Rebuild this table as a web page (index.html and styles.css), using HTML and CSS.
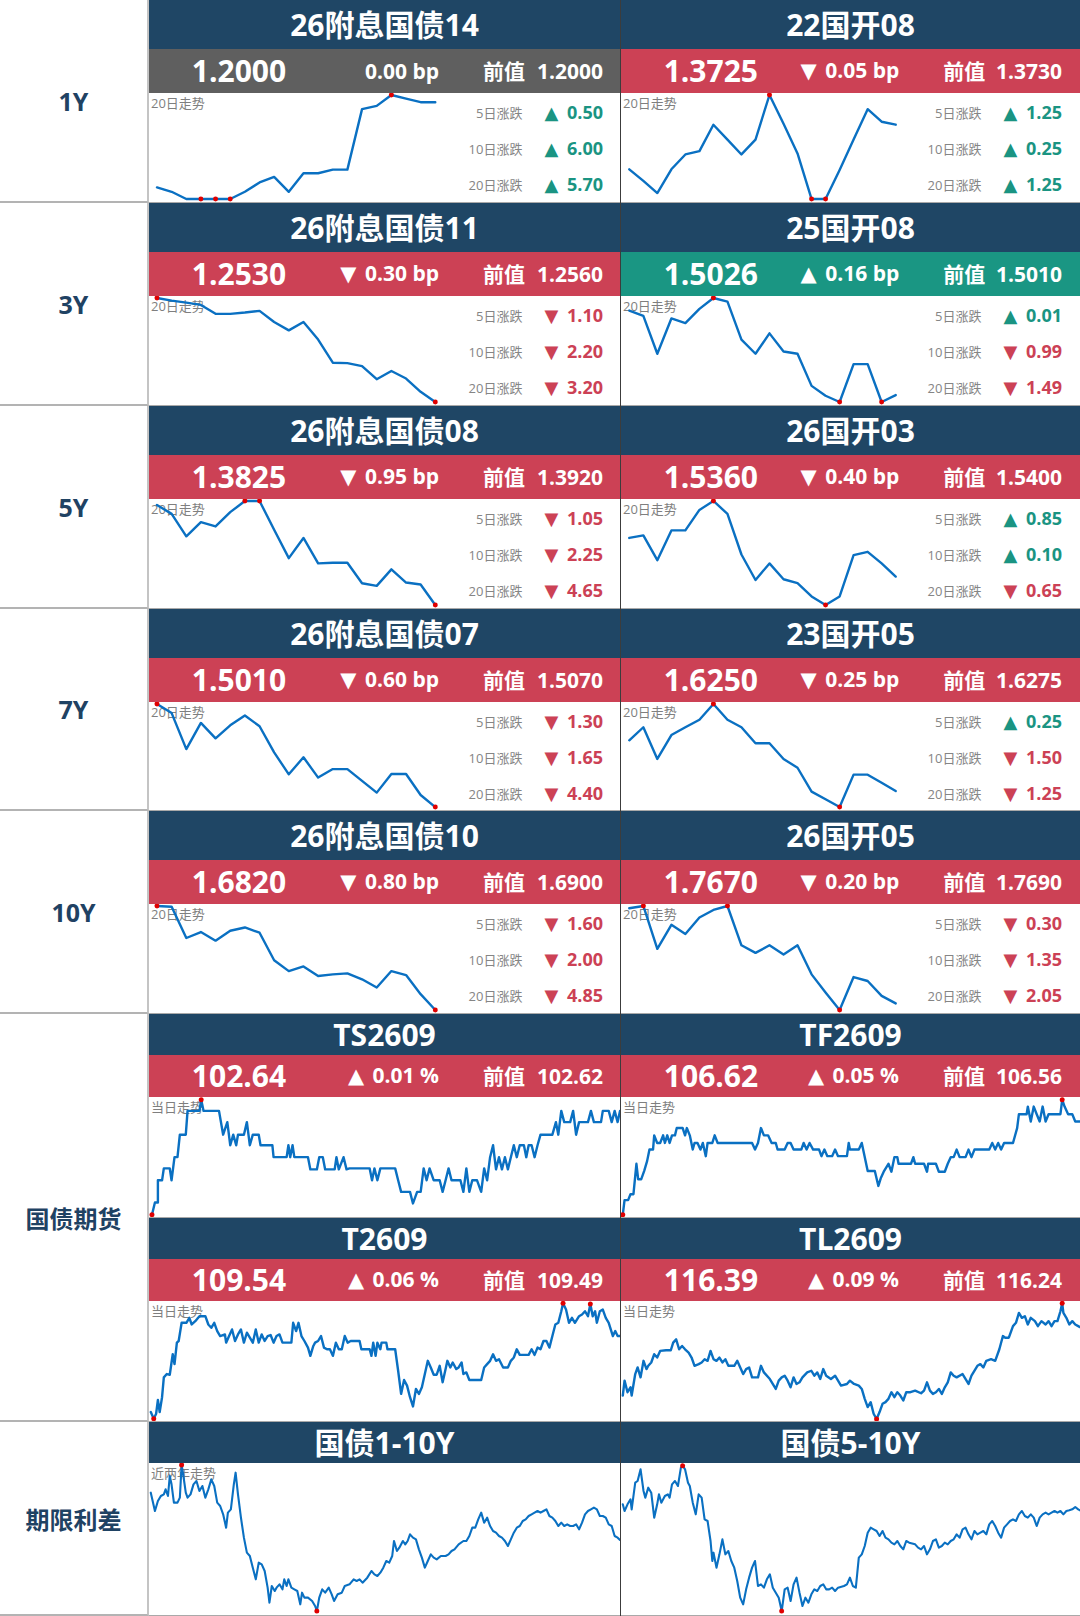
FILE: index.html
```html
<!DOCTYPE html>
<html lang="zh-CN">
<head>
<meta charset="utf-8">
<title>债券行情</title>
<link rel="stylesheet" href="styles.css">
</head>
<body>
<div class="board">

  <!-- 1Y -->
  <div class="lbl">1Y</div>
  <div class="cell c1">
    <div class="hd">26附息国债14</div>
    <div class="pr flat"><span class="px">1.2000</span><span class="chg">0.00 bp</span><span class="prev"><b>前值</b><b>1.2000</b></span></div>
    <div class="ch">
      <span class="tag">20日走势</span>
      <svg class="spark" viewBox="0 0 472 110" preserveAspectRatio="none">
        <polyline class="ln" points="8,95.3 22.7,99.7 37.4,107 52,107 66.7,107 81.4,107 96.1,99.7 110.8,90.3 125.4,84.7 140.1,99.7 154.8,81 169.5,81 184.2,77.3 198.8,77.3 213.5,16.3 228.2,13 242.9,2 257.6,5.7 272.2,9.3 286.9,9.3"/>
        <circle class="dot" cx="52" cy="107" r="2.5"/><circle class="dot" cx="66.7" cy="107" r="2.5"/><circle class="dot" cx="81.4" cy="107" r="2.5"/><circle class="dot" cx="242.9" cy="2" r="2.5"/>
      </svg>
      <div class="stats">
        <span class="k">5日涨跌</span><span class="v up"><i>▲</i> 0.50</span>
        <span class="k">10日涨跌</span><span class="v up"><i>▲</i> 6.00</span>
        <span class="k">20日涨跌</span><span class="v up"><i>▲</i> 5.70</span>
      </div>
    </div>
  </div>
  <div class="cell c2">
    <div class="hd">22国开08</div>
    <div class="pr dn"><span class="px">1.3725</span><span class="chg"><i>▼</i> 0.05 bp</span><span class="prev"><b>前值</b><b>1.3730</b></span></div>
    <div class="ch">
      <span class="tag">20日走势</span>
      <svg class="spark" viewBox="0 0 460 110" preserveAspectRatio="none">
        <polyline class="ln" points="8.3,77 22.4,88.7 36.4,101 50.5,77 64.5,62 78.6,58.7 92.6,32 106.7,47 120.7,62 134.8,47 148.8,2 162.9,31 176.9,61 191,107 205,107 219.1,77.7 233.1,47 247.2,16.3 261.2,29 275.3,32"/>
        <circle class="dot" cx="148.8" cy="2" r="2.5"/><circle class="dot" cx="191" cy="107" r="2.5"/><circle class="dot" cx="205" cy="107" r="2.5"/>
      </svg>
      <div class="stats">
        <span class="k">5日涨跌</span><span class="v up"><i>▲</i> 1.25</span>
        <span class="k">10日涨跌</span><span class="v up"><i>▲</i> 0.25</span>
        <span class="k">20日涨跌</span><span class="v up"><i>▲</i> 1.25</span>
      </div>
    </div>
  </div>

  <!-- 3Y -->
  <div class="lbl">3Y</div>
  <div class="cell c1">
    <div class="hd">26附息国债11</div>
    <div class="pr dn"><span class="px">1.2530</span><span class="chg"><i>▼</i> 0.30 bp</span><span class="prev"><b>前值</b><b>1.2560</b></span></div>
    <div class="ch">
      <span class="tag">20日走势</span>
      <svg class="spark" viewBox="0 0 472 110" preserveAspectRatio="none">
        <polyline class="ln" points="8,2 22.7,4.7 37.4,6.7 52,9 66.7,18 81.4,18 96.1,16.7 110.8,15 125.4,26.3 140.1,34.7 154.8,26.3 169.5,44 184.2,67.3 198.8,67.7 213.5,70.7 228.2,84 242.9,75.7 257.6,83.3 272.2,96.7 286.9,107"/>
        <circle class="dot" cx="8" cy="2" r="2.5"/><circle class="dot" cx="286.9" cy="107" r="2.5"/>
      </svg>
      <div class="stats">
        <span class="k">5日涨跌</span><span class="v dn"><i>▼</i> 1.10</span>
        <span class="k">10日涨跌</span><span class="v dn"><i>▼</i> 2.20</span>
        <span class="k">20日涨跌</span><span class="v dn"><i>▼</i> 3.20</span>
      </div>
    </div>
  </div>
  <div class="cell c2">
    <div class="hd">25国开08</div>
    <div class="pr up"><span class="px">1.5026</span><span class="chg"><i>▲</i> 0.16 bp</span><span class="prev"><b>前值</b><b>1.5010</b></span></div>
    <div class="ch">
      <span class="tag">20日走势</span>
      <svg class="spark" viewBox="0 0 460 110" preserveAspectRatio="none">
        <polyline class="ln" points="8.3,14.7 22.4,20 36.4,58.3 50.5,22.7 64.5,27.3 78.6,13 92.6,2 106.7,5.7 120.7,44 134.8,58.3 148.8,37.7 162.9,56 176.9,58.3 191,90.7 205,100.7 219.1,107 233.1,68.7 247.2,68.7 261.2,107 275.3,100"/>
        <circle class="dot" cx="92.6" cy="2" r="2.5"/><circle class="dot" cx="219.1" cy="107" r="2.5"/><circle class="dot" cx="261.2" cy="107" r="2.5"/>
      </svg>
      <div class="stats">
        <span class="k">5日涨跌</span><span class="v up"><i>▲</i> 0.01</span>
        <span class="k">10日涨跌</span><span class="v dn"><i>▼</i> 0.99</span>
        <span class="k">20日涨跌</span><span class="v dn"><i>▼</i> 1.49</span>
      </div>
    </div>
  </div>

  <!-- 5Y -->
  <div class="lbl">5Y</div>
  <div class="cell c1">
    <div class="hd">26附息国债08</div>
    <div class="pr dn"><span class="px">1.3825</span><span class="chg"><i>▼</i> 0.95 bp</span><span class="prev"><b>前值</b><b>1.3920</b></span></div>
    <div class="ch">
      <span class="tag">20日走势</span>
      <svg class="spark" viewBox="0 0 472 110" preserveAspectRatio="none">
        <polyline class="ln" points="8,6 22.7,15 37.4,37.7 52,23.3 66.7,27.7 81.4,13.3 96.1,2 110.8,2 125.4,31 140.1,59.7 154.8,39.3 169.5,65 184.2,64.3 198.8,64.3 213.5,85 228.2,87.7 242.9,71 257.6,84.3 272.2,86.3 286.9,107"/>
        <circle class="dot" cx="96.1" cy="2" r="2.5"/><circle class="dot" cx="110.8" cy="2" r="2.5"/><circle class="dot" cx="286.9" cy="107" r="2.5"/>
      </svg>
      <div class="stats">
        <span class="k">5日涨跌</span><span class="v dn"><i>▼</i> 1.05</span>
        <span class="k">10日涨跌</span><span class="v dn"><i>▼</i> 2.25</span>
        <span class="k">20日涨跌</span><span class="v dn"><i>▼</i> 4.65</span>
      </div>
    </div>
  </div>
  <div class="cell c2">
    <div class="hd">26国开03</div>
    <div class="pr dn"><span class="px">1.5360</span><span class="chg"><i>▼</i> 0.40 bp</span><span class="prev"><b>前值</b><b>1.5400</b></span></div>
    <div class="ch">
      <span class="tag">20日走势</span>
      <svg class="spark" viewBox="0 0 460 110" preserveAspectRatio="none">
        <polyline class="ln" points="8.3,39.3 22.4,36.7 36.4,61.7 50.5,31.7 64.5,31.7 78.6,11 92.6,2 106.7,15 120.7,56 134.8,81.7 148.8,65 162.9,81 176.9,85 191,98.3 205,107 219.1,98.3 233.1,56.7 247.2,53.3 261.2,65 275.3,78.3"/>
        <circle class="dot" cx="92.6" cy="2" r="2.5"/><circle class="dot" cx="205" cy="107" r="2.5"/>
      </svg>
      <div class="stats">
        <span class="k">5日涨跌</span><span class="v up"><i>▲</i> 0.85</span>
        <span class="k">10日涨跌</span><span class="v up"><i>▲</i> 0.10</span>
        <span class="k">20日涨跌</span><span class="v dn"><i>▼</i> 0.65</span>
      </div>
    </div>
  </div>

  <!-- 7Y -->
  <div class="lbl">7Y</div>
  <div class="cell c1">
    <div class="hd">26附息国债07</div>
    <div class="pr dn"><span class="px">1.5010</span><span class="chg"><i>▼</i> 0.60 bp</span><span class="prev"><b>前值</b><b>1.5070</b></span></div>
    <div class="ch">
      <span class="tag">20日走势</span>
      <svg class="spark" viewBox="0 0 472 110" preserveAspectRatio="none">
        <polyline class="ln" points="8,2 22.7,11.3 37.4,48 52,21.3 66.7,37 81.4,23.7 96.1,13.7 110.8,24.7 125.4,51.3 140.1,73.7 154.8,56.3 169.5,77 184.2,68.3 198.8,68.3 213.5,80.3 228.2,92.3 242.9,73.3 257.6,73.3 272.2,94.7 286.9,107"/>
        <circle class="dot" cx="8" cy="2" r="2.5"/><circle class="dot" cx="286.9" cy="107" r="2.5"/>
      </svg>
      <div class="stats">
        <span class="k">5日涨跌</span><span class="v dn"><i>▼</i> 1.30</span>
        <span class="k">10日涨跌</span><span class="v dn"><i>▼</i> 1.65</span>
        <span class="k">20日涨跌</span><span class="v dn"><i>▼</i> 4.40</span>
      </div>
    </div>
  </div>
  <div class="cell c2">
    <div class="hd">23国开05</div>
    <div class="pr dn"><span class="px">1.6250</span><span class="chg"><i>▼</i> 0.25 bp</span><span class="prev"><b>前值</b><b>1.6275</b></span></div>
    <div class="ch">
      <span class="tag">20日走势</span>
      <svg class="spark" viewBox="0 0 460 110" preserveAspectRatio="none">
        <polyline class="ln" points="8.3,39 22.4,25.7 36.4,58 50.5,33.7 64.5,25.7 78.6,18 92.6,2 106.7,18 120.7,25.7 134.8,42 148.8,42 162.9,58 176.9,67 191,91.3 205,99 219.1,107 233.1,74 247.2,74 261.2,82.3 275.3,90.7"/>
        <circle class="dot" cx="92.6" cy="2" r="2.5"/><circle class="dot" cx="219.1" cy="107" r="2.5"/>
      </svg>
      <div class="stats">
        <span class="k">5日涨跌</span><span class="v up"><i>▲</i> 0.25</span>
        <span class="k">10日涨跌</span><span class="v dn"><i>▼</i> 1.50</span>
        <span class="k">20日涨跌</span><span class="v dn"><i>▼</i> 1.25</span>
      </div>
    </div>
  </div>

  <!-- 10Y -->
  <div class="lbl">10Y</div>
  <div class="cell c1">
    <div class="hd">26附息国债10</div>
    <div class="pr dn"><span class="px">1.6820</span><span class="chg"><i>▼</i> 0.80 bp</span><span class="prev"><b>前值</b><b>1.6900</b></span></div>
    <div class="ch">
      <span class="tag">20日走势</span>
      <svg class="spark" viewBox="0 0 472 110" preserveAspectRatio="none">
        <polyline class="ln" points="8,2 22.7,2.8 37.4,34.3 52,28.3 66.7,37 81.4,27 96.1,23.7 110.8,29 125.4,56.7 140.1,67.7 154.8,63 169.5,72.7 184.2,71 198.8,70 213.5,76 228.2,84.3 242.9,67.7 257.6,71.7 272.2,91 286.9,107"/>
        <circle class="dot" cx="8" cy="2" r="2.5"/><circle class="dot" cx="286.9" cy="107" r="2.5"/>
      </svg>
      <div class="stats">
        <span class="k">5日涨跌</span><span class="v dn"><i>▼</i> 1.60</span>
        <span class="k">10日涨跌</span><span class="v dn"><i>▼</i> 2.00</span>
        <span class="k">20日涨跌</span><span class="v dn"><i>▼</i> 4.85</span>
      </div>
    </div>
  </div>
  <div class="cell c2">
    <div class="hd">26国开05</div>
    <div class="pr dn"><span class="px">1.7670</span><span class="chg"><i>▼</i> 0.20 bp</span><span class="prev"><b>前值</b><b>1.7690</b></span></div>
    <div class="ch">
      <span class="tag">20日走势</span>
      <svg class="spark" viewBox="0 0 460 110" preserveAspectRatio="none">
        <polyline class="ln" points="8.3,4.3 22.4,2 36.4,45.3 50.5,21 64.5,30.3 78.6,13.7 92.6,6 106.7,2 120.7,41.7 134.8,49.3 148.8,41.7 162.9,51 176.9,41.7 191,71 205,89.3 219.1,107 233.1,73.7 247.2,77.7 261.2,92.7 275.3,100.3"/>
        <circle class="dot" cx="22.4" cy="2" r="2.5"/><circle class="dot" cx="106.7" cy="2" r="2.5"/><circle class="dot" cx="219.1" cy="107" r="2.5"/>
      </svg>
      <div class="stats">
        <span class="k">5日涨跌</span><span class="v dn"><i>▼</i> 0.30</span>
        <span class="k">10日涨跌</span><span class="v dn"><i>▼</i> 1.35</span>
        <span class="k">20日涨跌</span><span class="v dn"><i>▼</i> 2.05</span>
      </div>
    </div>
  </div>

  <!-- 国债期货 -->
  <div class="lbl cn fut">国债期货</div>
  <div class="cell c1 sm">
    <div class="hd">TS2609</div>
    <div class="pr dn"><span class="px">102.64</span><span class="chg"><i>▲</i> 0.01 %</span><span class="prev"><b>前值</b><b>102.62</b></span></div>
    <div class="ch">
      <span class="tag">当日走势</span>
      <svg class="spark" viewBox="0 6 794 363" preserveAspectRatio="none">
        <polyline class="ln ns" points="5,362 10,325 15,325 15,258 22,258 25,222 35,222 38,258 43,188 48,188 52,120 62,120 65,48 85,48 88,14 92,48 118,48 125,120 132,82 137,152 142,120 147,152 150,120 160,120 165,82 170,152 175,120 185,120 188,152 208,152 210,188 232,188 235,152 238,188 242,152 245,188 268,188 272,225 283,225 287,188 293,188 297,225 313,225 316,188 320,225 328,188 333,225 338,222 372,222 376,258 380,222 385,258 390,222 415,222 420,258 425,293 440,293 445,328 452,293 458,293 463,222 468,258 473,222 480,258 490,258 495,293 500,258 505,222 510,258 525,258 530,293 535,222 540,293 545,258 553,258 560,293 565,222 570,258 575,188 580,152 585,225 590,188 595,225 600,188 605,225 610,188 615,152 620,188 625,152 632,152 636,188 640,152 645,152 650,188 655,152 660,120 680,120 686,82 690,120 695,48 700,82 710,82 715,48 720,120 725,82 740,82 745,48 750,82 762,82 765,48 775,48 780,82 785,48 790,82 794,48"/>
        <ellipse class="dot" cx="5" cy="362" rx="4.2" ry="7.6"/><ellipse class="dot" cx="88" cy="14" rx="4.2" ry="7.6"/>
      </svg>
    </div>
  </div>
  <div class="cell c2 sm">
    <div class="hd">TF2609</div>
    <div class="pr dn"><span class="px">106.62</span><span class="chg"><i>▲</i> 0.05 %</span><span class="prev"><b>前值</b><b>106.56</b></span></div>
    <div class="ch">
      <span class="tag">当日走势</span>
      <svg class="spark" viewBox="794 6 774 363" preserveAspectRatio="none">
        <polyline class="ln ns" points="797,362 800,318 806,318 810,300 815,300 820,208 823,255 828,255 833,230 838,200 842,165 848,165 850,122 855,145 860,145 865,122 868,145 872,122 876,145 880,122 885,122 888,100 898,100 902,122 905,100 910,122 915,165 918,145 923,145 928,165 932,145 937,185 940,145 948,145 952,122 957,145 962,145 1015,145 1020,165 1025,145 1030,100 1035,122 1042,122 1048,145 1055,145 1058,165 1070,165 1075,145 1080,145 1085,165 1098,165 1102,145 1107,165 1112,145 1118,165 1128,165 1132,185 1137,165 1142,185 1150,185 1155,165 1160,185 1175,185 1178,145 1180,165 1195,165 1200,145 1210,230 1222,230 1228,275 1232,252 1237,232 1245,208 1250,232 1255,188 1260,188 1262,208 1283,208 1287,188 1290,208 1305,208 1310,232 1312,208 1325,208 1330,232 1340,232 1345,208 1350,188 1355,188 1360,165 1365,188 1375,188 1380,165 1385,188 1390,165 1415,165 1420,145 1425,165 1430,145 1435,165 1440,145 1455,145 1462,100 1465,58 1478,58 1480,35 1485,80 1490,35 1495,58 1500,80 1505,35 1510,80 1515,58 1535,58 1538,14 1542,35 1548,58 1555,58 1560,80 1568,80"/>
        <ellipse class="dot" cx="797" cy="362" rx="4.2" ry="7.6"/><ellipse class="dot" cx="1538" cy="14" rx="4.2" ry="7.6"/>
      </svg>
    </div>
  </div>
  <div class="cell c1 sm">
    <div class="hd">T2609</div>
    <div class="pr dn"><span class="px">109.54</span><span class="chg"><i>▲</i> 0.06 %</span><span class="prev"><b>前值</b><b>109.49</b></span></div>
    <div class="ch">
      <span class="tag">当日走势</span>
      <svg class="spark" viewBox="0 9 794 363" preserveAspectRatio="none">
        <polyline class="ln ns" points="3,345 8,365 12,350 15,308 18,345 22,300 25,240 30,230 35,232 40,170 43,200 47,135 50,130 55,75 63,75 68,60 72,80 78,70 85,55 95,55 100,80 105,90 110,75 115,100 120,115 128,110 130,135 135,115 140,95 145,130 150,110 155,95 160,135 165,105 175,135 180,95 185,135 190,110 195,130 200,115 205,112 210,135 215,115 220,110 225,135 240,135 243,75 248,100 252,75 257,115 262,130 268,150 272,175 277,145 280,135 285,130 290,115 295,150 300,155 305,155 310,175 315,135 320,155 325,155 330,115 335,135 340,130 355,130 358,155 372,155 375,175 378,135 382,175 385,135 390,155 392,135 400,135 402,155 415,155 420,220 425,290 430,248 435,265 440,300 445,328 450,275 455,290 460,270 465,230 470,190 475,210 480,232 485,232 490,205 495,255 500,215 503,190 508,210 512,195 518,215 522,210 527,195 530,230 535,225 540,248 560,248 565,210 570,200 575,190 580,170 585,190 590,185 597,210 605,210 610,190 615,180 620,155 625,172 640,172 645,155 650,172 655,150 660,155 665,130 670,130 675,150 680,115 685,80 690,75 695,40 698,16 703,35 708,75 713,60 718,75 725,55 730,50 735,40 740,55 744,18 748,55 752,40 755,75 760,40 765,35 770,60 775,75 782,115 786,100 790,115 794,115"/>
        <ellipse class="dot" cx="8" cy="365" rx="4.2" ry="7.6"/><ellipse class="dot" cx="698" cy="16" rx="4.2" ry="7.6"/><ellipse class="dot" cx="744" cy="18" rx="4.2" ry="7.6"/>
      </svg>
    </div>
  </div>
  <div class="cell c2 sm">
    <div class="hd">TL2609</div>
    <div class="pr dn"><span class="px">116.39</span><span class="chg"><i>▲</i> 0.09 %</span><span class="prev"><b>前值</b><b>116.24</b></span></div>
    <div class="ch">
      <span class="tag">当日走势</span>
      <svg class="spark" viewBox="794 9 774 363" preserveAspectRatio="none">
        <polyline class="ln ns" points="797,295 800,250 805,285 810,270 812,295 818,230 822,210 827,240 832,190 837,215 840,205 845,195 850,170 855,180 860,160 870,158 878,158 882,135 887,125 892,155 897,145 902,155 908,165 913,180 918,205 925,200 930,195 935,185 940,190 945,160 950,185 955,190 960,180 965,195 970,185 975,205 985,205 990,190 1000,230 1005,215 1010,210 1015,240 1025,240 1030,205 1035,225 1045,245 1055,275 1060,250 1065,240 1070,235 1075,250 1080,270 1085,240 1090,260 1095,255 1100,240 1108,225 1115,220 1120,235 1125,225 1130,245 1135,215 1140,235 1148,245 1155,235 1165,265 1175,260 1180,250 1187,260 1195,265 1200,275 1205,305 1210,330 1215,315 1220,350 1225,366 1230,345 1235,320 1240,315 1245,305 1250,285 1255,300 1260,285 1265,295 1270,310 1275,285 1282,285 1290,280 1300,288 1305,280 1310,255 1315,280 1320,290 1325,285 1330,275 1335,290 1340,270 1345,255 1350,225 1355,235 1360,240 1370,230 1380,260 1385,235 1395,205 1400,200 1405,210 1410,190 1418,185 1425,190 1432,155 1438,115 1442,120 1448,120 1455,85 1460,75 1465,45 1470,60 1475,55 1480,80 1485,60 1492,70 1497,85 1503,70 1510,80 1515,70 1520,85 1525,70 1530,70 1535,40 1538,16 1540,45 1545,60 1550,80 1555,70 1560,80 1565,85 1568,88"/>
        <ellipse class="dot" cx="1225" cy="366" rx="4.2" ry="7.6"/><ellipse class="dot" cx="1538" cy="16" rx="4.2" ry="7.6"/>
      </svg>
    </div>
  </div>

  <!-- 期限利差 -->
  <div class="lbl cn">期限利差</div>
  <div class="cell c1 sp">
    <div class="hd">国债1-10Y</div>
    <div class="ch">
      <span class="tag">近两年走势</span>
      <svg class="spark" viewBox="0 6 794 456" preserveAspectRatio="none">
        <polyline class="ln ns thin" points="3,95 10,150 15,120 20,105 25,100 28,85 32,105 35,45 38,70 42,125 48,125 52,110 55,12 58,45 62,95 65,110 70,100 75,70 80,60 85,90 90,75 95,110 100,85 105,55 110,75 115,125 120,135 125,160 130,200 133,155 138,145 143,70 146,35 150,100 155,170 160,230 165,275 170,285 175,320 180,355 185,305 190,310 195,330 200,380 203,425 207,375 212,390 215,380 220,370 225,385 228,355 232,375 235,355 240,380 245,385 250,390 255,430 258,395 262,410 268,410 275,420 280,435 283,450 287,410 292,385 297,395 303,380 308,400 312,420 318,400 325,395 330,375 338,370 345,355 350,360 355,355 360,365 368,350 375,330 380,340 385,345 390,335 395,320 400,300 405,305 410,285 413,240 418,270 422,260 428,240 432,250 436,240 440,220 445,230 450,235 455,265 460,290 465,320 470,300 475,280 480,290 485,295 492,285 500,285 505,280 510,270 515,265 522,250 530,240 535,240 540,225 545,200 550,200 555,175 560,155 565,185 570,170 575,195 580,210 585,215 590,225 595,230 600,240 605,255 610,235 615,215 620,200 625,195 630,180 635,175 640,165 645,160 650,155 655,150 660,155 665,150 670,145 675,165 680,170 685,180 690,195 695,185 700,195 705,190 710,195 715,195 720,190 725,205 730,185 735,160 740,150 745,145 750,140 755,145 760,165 765,165 770,170 775,190 780,195 785,225 790,230 794,237"/>
        <ellipse class="dot" cx="55" cy="12" rx="4.2" ry="7.5"/><ellipse class="dot" cx="283" cy="450" rx="4.2" ry="7.5"/>
      </svg>
    </div>
  </div>
  <div class="cell c2 sp">
    <div class="hd">国债5-10Y</div>
    <div class="ch">
      <svg class="spark" viewBox="794 6 774 456" preserveAspectRatio="none">
        <polyline class="ln ns thin" points="797,130 800,150 805,130 810,115 812,145 818,65 822,60 827,25 832,90 835,110 840,80 845,95 850,170 855,130 858,100 862,125 868,105 873,100 876,110 880,70 885,60 890,75 895,20 898,14 902,25 907,65 910,75 915,125 920,160 925,100 930,110 935,175 940,180 945,240 948,300 950,275 955,320 960,280 965,235 970,280 975,270 980,300 985,320 990,360 995,410 1000,430 1005,385 1010,350 1015,320 1020,300 1025,375 1030,370 1035,380 1040,355 1045,340 1050,380 1055,395 1060,410 1065,450 1070,385 1075,380 1080,420 1085,370 1090,350 1095,395 1100,435 1105,410 1110,425 1115,400 1120,385 1125,390 1130,375 1135,370 1140,385 1145,385 1150,380 1155,390 1160,380 1170,375 1175,370 1180,350 1185,375 1190,380 1195,290 1200,280 1205,255 1210,215 1215,200 1220,205 1225,210 1230,225 1235,210 1240,230 1245,235 1250,245 1255,250 1260,240 1265,255 1270,265 1275,240 1280,245 1290,250 1295,260 1300,265 1305,255 1310,280 1315,265 1320,240 1325,235 1330,260 1335,255 1340,245 1345,250 1350,240 1355,235 1360,220 1365,230 1370,205 1375,200 1380,220 1385,235 1390,210 1395,220 1400,215 1405,210 1410,220 1415,190 1420,180 1425,195 1430,215 1435,230 1440,200 1445,190 1450,180 1455,175 1460,180 1465,160 1470,150 1475,165 1480,170 1485,160 1490,170 1495,195 1500,170 1505,160 1510,155 1515,160 1520,155 1525,150 1530,155 1535,150 1540,160 1545,150 1550,148 1555,145 1560,138 1565,145 1568,148"/>
        <ellipse class="dot" cx="898" cy="14" rx="4.2" ry="7.5"/><ellipse class="dot" cx="1065" cy="450" rx="4.2" ry="7.5"/>
      </svg>
    </div>
  </div>

</div>
</body>
</html>
```

FILE: styles.css
```css
* {
  box-sizing: border-box;
  margin: 0;
  padding: 0;
}

html,
body {
  background: #ffffff;
}

body {
  width: 1080px;
  font-family: "Open Sans", "Noto Sans CJK SC", sans-serif;
}

.board {
  display: grid;
  grid-template-columns: 149px 471px 460px;
  grid-template-rows: 203px 203px 203px 202px 203px 204px 204px 194px;
}

/* left label column */
.lbl {
  display: flex;
  align-items: center;
  justify-content: center;
  border-right: 2px solid #c4c4c4;
  border-bottom: 2px solid #b3b3b3;
  color: #1f4263;
  font-weight: 700;
  font-size: 25px;
}

.lbl.cn {
  font-size: 24px;
}

.lbl.fut {
  grid-row: span 2;
}

/* cells */
.cell {
  display: flex;
  flex-direction: column;
  overflow: hidden;
  min-height: 0;
}

.c2 {
  border-left: 1px solid #3c3c3c;
}

.hd {
  flex: none;
  height: 49px;
  display: flex;
  align-items: center;
  justify-content: center;
  background: #1f4665;
  color: #ffffff;
  font-weight: 700;
  font-size: 30px;
  line-height: 1;
}

.sm .hd,
.sp .hd {
  height: 41px;
}

/* price row */
.pr {
  flex: none;
  height: 44px;
  display: flex;
  align-items: center;
  color: #ffffff;
  font-weight: 700;
  line-height: 1;
  white-space: nowrap;
}

.sm .pr {
  height: 42px;
}

.pr.dn {
  background: #cc4155;
}

.pr.up {
  background: #1a9683;
}

.pr.flat {
  background: #5f5f5f;
}

.px {
  width: 180px;
  text-align: center;
  font-size: 30px;
}

.chg {
  flex: 1;
  text-align: right;
  font-size: 21px;
}

.chg i,
.v i {
  font-style: normal;
  font-family: "DejaVu Sans", sans-serif;
}

.chg i {
  font-size: 21px;
  margin-right: 3px;
}

.prev {
  width: 181px;
  padding: 0 17px 0 44px;
  display: flex;
  justify-content: space-between;
  font-size: 21px;
}

.c2 .prev {
  padding-right: 18px;
}

.prev b {
  font-weight: 700;
}

/* chart area */
.ch {
  flex: 1;
  min-height: 0;
  display: grid;
  grid-template-rows: minmax(0, 1fr);
  grid-template-columns: minmax(0, 1fr);
  border-bottom: 1px solid #a9a9a9;
  background: #ffffff;
}

.ch > * {
  grid-area: 1 / 1;
}

.tag {
  align-self: start;
  justify-self: start;
  padding: 2px 0 0 2px;
  font-size: 13px;
  line-height: 16px;
  color: #7f7f7f;
}

.spark {
  display: block;
  width: 100%;
  height: 100%;
}

.ln {
  fill: none;
  stroke: #0a70c2;
  stroke-width: 2.4;
  stroke-linejoin: round;
  stroke-linecap: round;
}

.ns {
  vector-effect: non-scaling-stroke;
  stroke-width: 2.4;
}

.ns.thin {
  stroke-width: 2.1;
}

.dot {
  fill: #e00000;
}

/* stats */
.stats {
  align-self: start;
  justify-self: end;
  display: grid;
  grid-template-columns: auto auto;
  grid-auto-rows: 36px;
  column-gap: 22px;
  align-items: center;
  padding: 1px 17px 0 0;
  white-space: nowrap;
}

.c2 .stats {
  padding-right: 18px;
}

.k {
  text-align: right;
  font-size: 13px;
  color: #858585;
}

.v {
  font-size: 18px;
  font-weight: 700;
  line-height: 1;
}

.v i {
  font-size: 18px;
  margin-right: 4px;
}

.v.up {
  color: #1a9482;
}

.v.dn {
  color: #cc4155;
}
```
